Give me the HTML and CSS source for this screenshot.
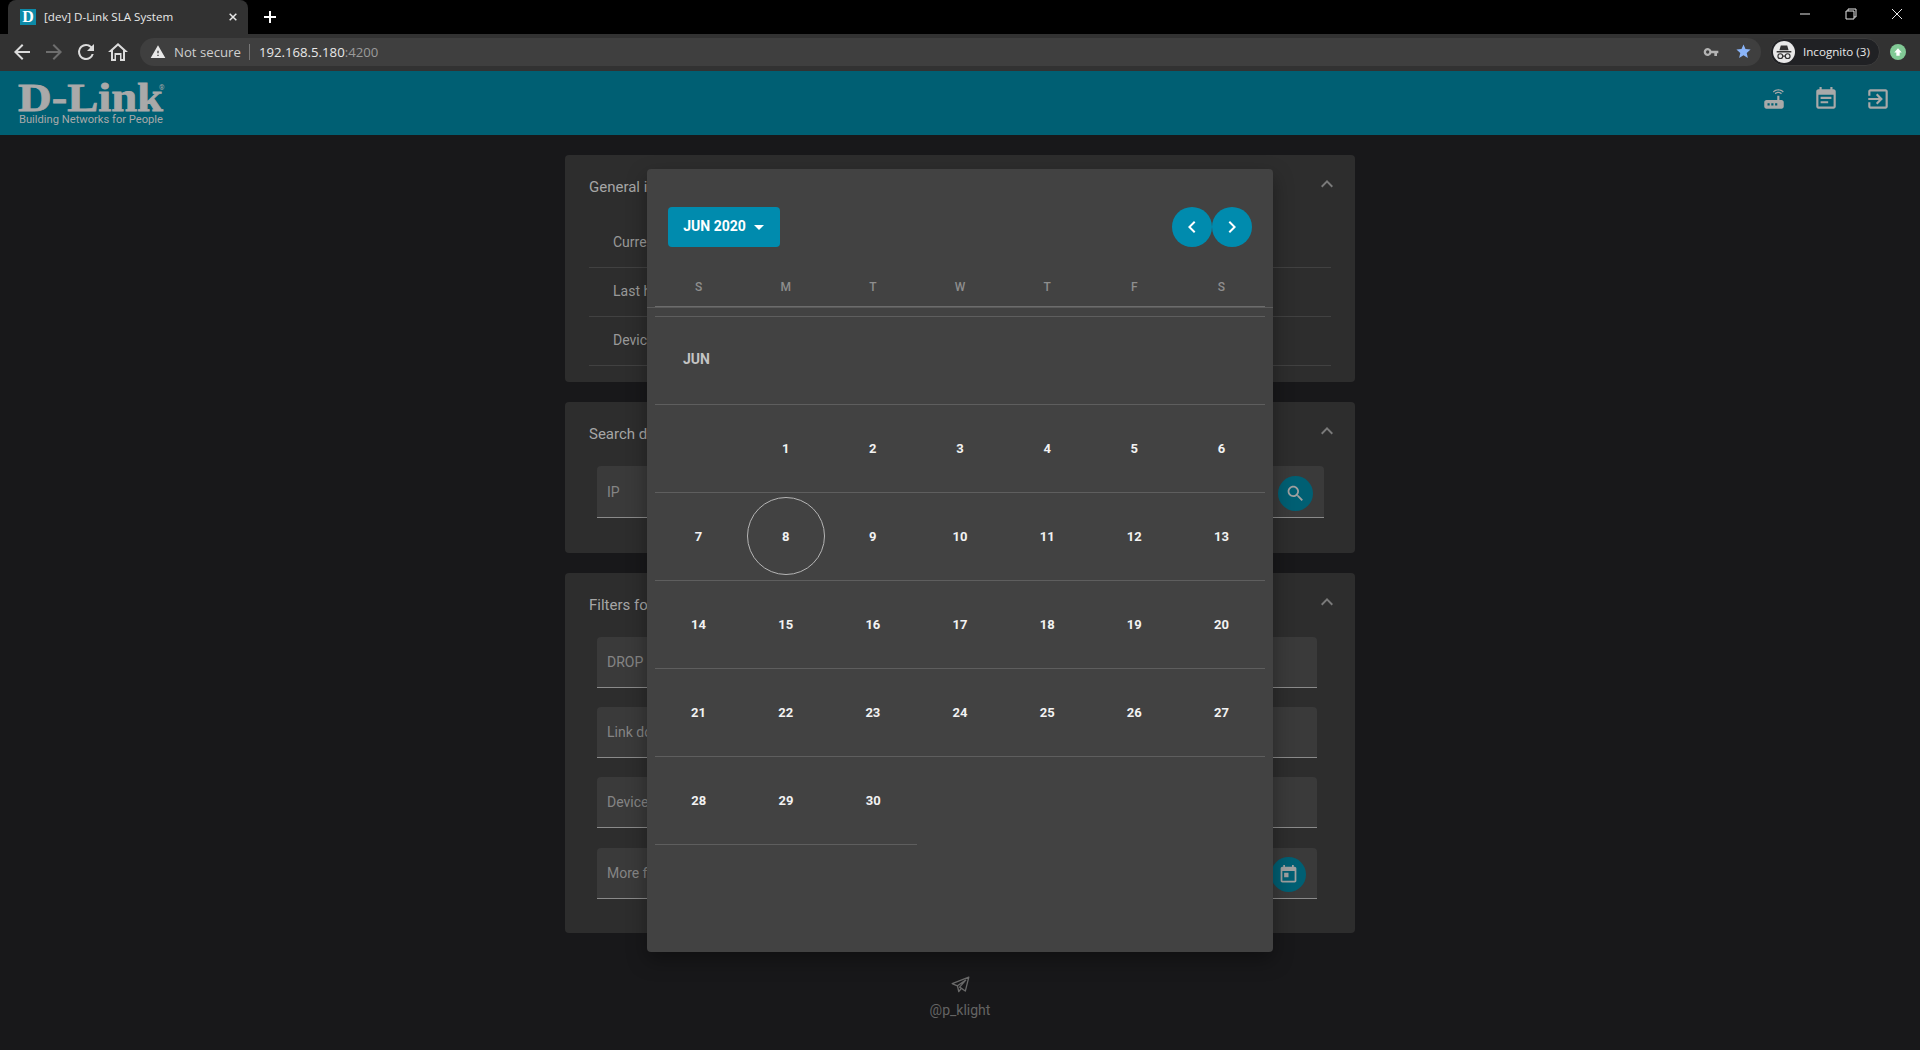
FILE: index.html
```html
<!DOCTYPE html>
<html>
<head>
	<title>[dev] D-Link SLA System</title>
	<link rel="stylesheet" href="styles.css">
</head>
<body>
	<div class="tabstrip">
		<div class="tab">
			<span class="favicon">D</span>
			<span class="tab-title">[dev] D-Link SLA System</span>
			<svg class="tab-close" viewBox="0 0 12 12"><path d="M2 2l8 8M10 2l-8 8"/></svg>
		</div>
		<svg class="new-tab" viewBox="0 0 14 14"><path d="M7 1v12M1 7h12"/></svg>
		<div class="win-controls">
			<svg viewBox="0 0 12 12"><path d="M1 6h10"/></svg>
			<svg viewBox="0 0 12 12"><path d="M3 3V1h8v8H9M1 3h8v8H1z"/></svg>
			<svg viewBox="0 0 12 12"><path d="M1 1l10 10M11 1L1 11"/></svg>
		</div>
	</div>

	<div class="toolbar">
		<svg class="nav-icon" viewBox="0 0 24 24"><path d="M20 11H7.83l5.59-5.59L12 4l-8 8 8 8 1.41-1.41L7.83 13H20z"/></svg>
		<svg class="nav-icon off" viewBox="0 0 24 24"><path d="M12 4l-1.41 1.41L16.17 11H4v2h12.17l-5.58 5.59L12 20l8-8z"/></svg>
		<svg class="nav-icon" viewBox="0 0 24 24"><path d="M17.65 6.35A7.96 7.96 0 0 0 12 4a8 8 0 1 0 7.73 10h-2.08A6 6 0 1 1 12 6c1.66 0 3.14.69 4.22 1.78L13 11h7V4z"/></svg>
		<svg class="nav-icon" viewBox="0 0 24 24"><path d="M12 3L2 12h3v9h5v-6h4v6h5v-9h3zm5 16h-1.500v-6h-7v6H7v-8.800l5-4.500 5 4.500z"/></svg>
		<div class="omnibox">
			<svg class="warn" viewBox="0 0 24 24"><path d="M1 21h22L12 2 1 21zm12-3h-2v-2h2v2zm0-4h-2v-4h2v4z"/></svg>
			<span class="not-secure">Not secure</span>
			<span class="omni-sep"></span>
			<span class="url">192.168.5.180<span class="url-port">:4200</span></span>
			<svg class="key" viewBox="0 0 24 24"><path d="M12.650 10A6 6 0 1 0 12.650 14H17v4h4v-4h2v-4zM7 14.500a2.500 2.500 0 1 1 0-5 2.500 2.500 0 0 1 0 5z"/></svg>
			<svg class="star" viewBox="0 0 24 24"><path d="M12 17.270L18.180 21l-1.640-7.030L22 9.240l-7.190-.61L12 2 9.190 8.630 2 9.240l5.460 4.730L5.820 21z"/></svg>
		</div>
		<div class="incognito">
			<span class="incognito-face">
				<svg viewBox="0 0 24 24"><path d="M7 10l1.500-5h7l1.500 5zM4 11h16v1.500H4z"/><circle class="glass" cx="8" cy="16.500" r="2.600"/><circle class="glass" cx="16" cy="16.500" r="2.600"/><path class="glass" d="M10.600 16.500h2.800"/></svg>
			</span>
			<span class="incognito-label">Incognito (3)</span>
		</div>
		<span class="update-dot">
			<svg viewBox="0 0 12 12"><path d="M6 1.500L1.500 6.500H4V10.500H8V6.500H10.500z"/></svg>
		</span>
	</div>

	<header class="app-header">
		<svg class="logo" viewBox="0 0 150 64">
			<text class="logo-name" x="0" y="39.500" textLength="145" lengthAdjust="spacingAndGlyphs">D-Link</text>
			<text class="logo-reg" x="141" y="19">®</text>
			<text class="logo-tag" x="1" y="52" textLength="144" lengthAdjust="spacingAndGlyphs">Building Networks for People</text>
		</svg>
		<div class="header-actions">
			<svg viewBox="0 0 24 24"><path d="M20.200 5.900l.8-.8C19.600 3.700 17.800 3 16 3s-3.600.7-5 2.100l.8.8C13 4.800 14.500 4.200 16 4.200s3 .6 4.200 1.700zm-.9.8c-.9-.9-2.100-1.400-3.300-1.400s-2.400.5-3.300 1.400l.8.8c.7-.7 1.600-1 2.500-1 .9 0 1.800.3 2.500 1l.8-.8zM19 13h-2V9h-2v4H5c-1.100 0-2 .9-2 2v4c0 1.100.9 2 2 2h14c1.100 0 2-.9 2-2v-4c0-1.100-.9-2-2-2zM8 18H6v-2h2v2zm3.500 0h-2v-2h2v2zm3.500 0h-2v-2h2v2z"/></svg>
			<svg viewBox="0 0 24 24"><path d="M17 10H7v2h10v-2zm2-7h-1V1h-2v2H8V1H6v2H5c-1.110 0-1.990.9-1.990 2L3 19c0 1.100.89 2 2 2h14c1.100 0 2-.9 2-2V5c0-1.100-.9-2-2-2zm0 16H5V8h14v11zm-5-5H7v2h7v-2z"/></svg>
			<svg viewBox="0 0 24 24"><path d="M10.090 15.590L11.500 17l5-5-5-5-1.410 1.410L12.670 11H3v2h9.670l-2.580 2.590zM19 3H5c-1.110 0-2 .9-2 2v4h2V5h14v14H5v-4H3v4c0 1.100.89 2 2 2h14c1.100 0 2-.9 2-2V5c0-1.100-.9-2-2-2z"/></svg>
		</div>
	</header>

	<main class="content">
		<section class="card card-info">
			<div class="card-head">
				<span class="card-title">General info</span>
				<svg class="chevron" viewBox="0 0 24 24"><path d="M12 8l-6 6 1.410 1.410L12 10.830l4.590 4.580L18 14z"/></svg>
			</div>
			<div class="info-row">Current</div>
			<div class="info-row">Last hour</div>
			<div class="info-row">Device</div>
		</section>

		<section class="card card-search">
			<div class="card-head">
				<span class="card-title">Search device</span>
				<svg class="chevron" viewBox="0 0 24 24"><path d="M12 8l-6 6 1.410 1.410L12 10.830l4.590 4.580L18 14z"/></svg>
			</div>
			<div class="field field-search">
				<span>IP</span>
				<span class="field-btn">
					<svg viewBox="0 0 24 24"><path d="M15.500 14h-.79l-.28-.27C15.410 12.590 16 11.110 16 9.500 16 5.910 13.090 3 9.500 3S3 5.910 3 9.500 5.910 16 9.500 16c1.610 0 3.090-.59 4.230-1.570l.27.28v.79l5 4.990L20.490 19l-4.990-5zm-6 0C7.010 14 5 11.990 5 9.500S7.010 5 9.500 5 14 7.010 14 9.500 11.990 14 9.500 14z"/></svg>
				</span>
			</div>
		</section>

		<section class="card card-filters">
			<div class="card-head">
				<span class="card-title">Filters for</span>
				<svg class="chevron" viewBox="0 0 24 24"><path d="M12 8l-6 6 1.410 1.410L12 10.830l4.590 4.580L18 14z"/></svg>
			</div>
			<div class="field"><span>DROP</span></div>
			<div class="field"><span>Link down</span></div>
			<div class="field"><span>Device</span></div>
			<div class="field field-last">
				<span>More filters</span>
				<span class="field-btn">
					<svg viewBox="0 0 24 24"><path d="M19 3h-1V1h-2v2H8V1H6v2H5c-1.110 0-1.990.9-1.990 2L3 19c0 1.100.89 2 2 2h14c1.100 0 2-.9 2-2V5c0-1.100-.9-2-2-2zm0 16H5V8h14v11zM7 10h5v5H7z"/></svg>
				</span>
			</div>
		</section>

		<footer class="credit">
			<svg viewBox="0 0 24 24"><path d="M21.500 3.500L2.500 11l6 2.500L18 7l-7 8 6.500 4.500zM8.500 13.500L10 20l2.500-3"/></svg>
			<span>@p_klight</span>
		</footer>
	</main>

	<div class="picker">
		<div class="picker-bar">
			<button class="period-btn">JUN 2020<span class="caret"></span></button>
			<div class="picker-nav">
				<span class="round-btn"><svg viewBox="0 0 24 24"><path d="M15.410 7.410L14 6l-6 6 6 6 1.410-1.410L10.830 12z"/></svg></span>
				<span class="round-btn"><svg viewBox="0 0 24 24"><path d="M10 6L8.590 7.410 13.170 12l-4.580 4.590L10 18l6-6z"/></svg></span>
			</div>
		</div>
		<div class="weekdays">
			<span>S</span><span>M</span><span>T</span><span>W</span><span>T</span><span>F</span><span>S</span>
		</div>
		<div class="divider"></div>
		<div class="month-row">JUN</div>
		<div class="week">
			<span></span><span>1</span><span>2</span><span>3</span><span>4</span><span>5</span><span>6</span>
		</div>
		<div class="week">
			<span>7</span><span class="today">8</span><span>9</span><span>10</span><span>11</span><span>12</span><span>13</span>
		</div>
		<div class="week">
			<span>14</span><span>15</span><span>16</span><span>17</span><span>18</span><span>19</span><span>20</span>
		</div>
		<div class="week">
			<span>21</span><span>22</span><span>23</span><span>24</span><span>25</span><span>26</span><span>27</span>
		</div>
		<div class="week week-last">
			<span>28</span><span>29</span><span>30</span>
		</div>
	</div>
</body>
</html>
```

FILE: styles.css
```css
* {
	box-sizing: border-box;
}
html, body {
	margin: 0;
	height: 100%;
	overflow: hidden;
}
body {
	background-color: #18181a;
	font-family: Roboto, "Liberation Sans", sans-serif;
	color: #a6a6a6;
}

/* browser chrome */
.tabstrip {
	height: 34px;
	background-color: #000;
	display: flex;
	align-items: flex-end;
	padding-left: 8px;
}
.tab {
	width: 240px;
	height: 34px;
	background-color: #323232;
	border-radius: 8px 8px 0 0;
	display: flex;
	align-items: center;
	padding: 0 12px 1px;
	color: #e8e8e8;
	font-family: "Open Sans", sans-serif;
	font-size: 11.600px;
}
.favicon {
	width: 16px;
	height: 16px;
	background-color: #0d8aa8;
	color: #fff;
	font-family: "Liberation Serif", serif;
	font-weight: bold;
	font-size: 16px;
	line-height: 16px;
	text-align: center;
	margin-right: 8px;
}
.tab-title {
	flex: 1;
}
.tab-close {
	width: 10px;
	height: 10px;
	fill: none;
	stroke: #e8e8e8;
	stroke-width: 1.800;
	margin-right: -2px;
}
.new-tab {
	width: 14px;
	height: 14px;
	fill: none;
	stroke: #fff;
	stroke-width: 2;
	margin: 0 0 10px 15px;
}
.win-controls {
	margin-left: auto;
	height: 34px;
	display: flex;
	align-items: flex-start;
	padding: 8px 17px 0 0;
	gap: 34px;
}
.win-controls svg {
	width: 12px;
	height: 12px;
	fill: none;
	stroke: #e6e6e6;
	stroke-width: 1;
}
.toolbar {
	height: 37px;
	background-color: #323232;
	display: flex;
	align-items: center;
	padding: 0 0 2px 10px;
}
.nav-icon {
	width: 24px;
	height: 24px;
	fill: #dcdcdc;
	margin-right: 8px;
}
.nav-icon.off {
	fill: #6e6e6e;
}
.omnibox {
	width: 1621px;
	height: 28px;
	margin-left: 2px;
	background-color: #3f3f3f;
	border-radius: 14px;
	display: flex;
	align-items: center;
	padding-left: 10px;
	font-family: "Open Sans", sans-serif;
	font-size: 13.200px;
}
.warn {
	width: 16px;
	height: 16px;
	fill: #e8e8e8;
}
.not-secure {
	margin-left: 8px;
	color: #cfcfcf;
}
.omni-sep {
	width: 1px;
	height: 16px;
	background-color: #777;
	margin: 0 9px 0 8px;
}
.url {
	color: #e8e8e8;
}
.url-port {
	color: #9a9a9a;
}
.key {
	width: 16px;
	height: 16px;
	fill: #b4b4b4;
	margin-left: auto;
}
.star {
	width: 17px;
	height: 17px;
	fill: #8ab4f8;
	margin: 0 9px 0 16px;
}
.incognito {
	width: 110px;
	height: 28px;
	margin-left: 9px;
	background-color: #202124;
	border: 1px solid #3c3c3c;
	border-radius: 14px;
	display: flex;
	align-items: center;
	padding-left: 2px;
	font-family: "Open Sans", sans-serif;
	font-size: 11.600px;
	color: #e8e8e8;
}
.incognito-face {
	width: 22px;
	height: 22px;
	background-color: #e8e8e8;
	border-radius: 50%;
	margin-right: 8px;
	display: flex;
}
.incognito-face svg {
	width: 22px;
	height: 22px;
	fill: #333;
}
.incognito-face .glass {
	fill: none;
	stroke: #333;
	stroke-width: 1.300;
}
.update-dot {
	width: 16px;
	height: 16px;
	margin-left: 10px;
	background-color: #81c995;
	border-radius: 50%;
	display: flex;
	align-items: center;
	justify-content: center;
}
.update-dot svg {
	width: 10px;
	height: 10px;
	fill: #fff;
}

/* app header */
.app-header {
	height: 64px;
	background-color: #005f73;
	display: flex;
	align-items: center;
	justify-content: space-between;
	padding: 0 29px 0 18px;
}
.logo {
	width: 150px;
	height: 64px;
	fill: #a9a9a9;
}
.logo-name {
	font-family: "Liberation Serif", serif;
	font-weight: bold;
	font-size: 40px;
	stroke: #a9a9a9;
	stroke-width: 0.800;
}
.logo-reg {
	font-size: 7px;
}
.logo-tag {
	font-size: 11.300px;
	font-weight: 400;
}
.header-actions {
	display: flex;
	gap: 26px;
	margin-top: -8px;
}
.header-actions svg {
	width: 26px;
	height: 26px;
	fill: #a9a9a9;
}

/* cards behind the dialog */
.content {
	width: 790px;
	margin: 0 auto;
	padding-top: 20px;
	display: flex;
	flex-direction: column;
	gap: 20px;
}
.card {
	background-color: #2d2d2d;
	border-radius: 4px;
	padding: 0 24px;
}
.card-info {
	height: 227px;
}
.card-search {
	height: 151px;
}
.card-filters {
	height: 360px;
}
.card-head {
	height: 64px;
	display: flex;
	justify-content: space-between;
	align-items: center;
}
.card-title {
	font-size: 15px;
	font-weight: 400;
	color: #a6a6a6;
}
.chevron {
	width: 24px;
	height: 24px;
	fill: #7a7a7a;
	margin: -6px -8px 0 0;
}
.info-row {
	height: 49px;
	border-bottom: 1px solid #414141;
	padding-left: 24px;
	font-size: 14px;
	line-height: 47px;
	color: #999;
}
.field {
	height: 51px;
	margin: 0 14px 19px 8px;
	padding: 0 10px;
	background-color: #3a3a3a;
	border-bottom: 1px solid #8a8a8a;
	border-radius: 4px 4px 0 0;
	display: flex;
	align-items: center;
	justify-content: space-between;
	font-size: 14px;
	color: #858585;
}
.field-search {
	height: 52px;
	margin: 0 7px 0 8px;
}
.field-last {
	margin-top: 20px;
}
.field-btn {
	width: 35px;
	height: 35px;
	background-color: #005f73;
	border-radius: 50%;
	display: flex;
	align-items: center;
	justify-content: center;
	margin: 3px 1px 0 0;
}
.field-btn svg {
	width: 21px;
	height: 21px;
	fill: #a0a0a0;
}
.credit {
	margin-top: 21px;
	display: flex;
	flex-direction: column;
	align-items: center;
	gap: 7px;
	font-size: 14px;
	color: #646464;
}
.credit svg {
	width: 21px;
	height: 21px;
	fill: none;
	stroke: #6a6a6a;
	stroke-width: 1.500;
	stroke-linejoin: round;
}

/* date picker */
.picker {
	position: absolute;
	left: 647px;
	top: 169px;
	width: 626px;
	height: 783px;
	background-color: #424242;
	border-radius: 4px;
	padding-top: 38px;
	box-shadow: 0 8px 20px rgba(0, 0, 0, 0.35);
}
.picker-bar {
	height: 40px;
	padding: 0 21px;
	display: flex;
	justify-content: space-between;
}
.period-btn {
	width: 112px;
	height: 40px;
	background-color: #008bae;
	color: #fff;
	border: none;
	border-radius: 4px;
	font-family: Roboto, sans-serif;
	font-size: 14px;
	font-weight: 700;
	display: flex;
	align-items: center;
	justify-content: center;
	gap: 8px;
	padding: 0 1px 2px 0;
}
.caret {
	border-top: 5px solid #fff;
	border-left: 5px solid transparent;
	border-right: 5px solid transparent;
	margin-top: 3px;
}
.picker-nav {
	display: flex;
}
.round-btn {
	width: 40px;
	height: 40px;
	background-color: #008bae;
	border-radius: 50%;
	display: flex;
	align-items: center;
	justify-content: center;
}
.round-btn svg {
	width: 24px;
	height: 24px;
	fill: #fff;
}
.weekdays {
	height: 60px;
	margin: 0 8px;
	padding-top: 31px;
	border-bottom: 1px solid #6c6c6c;
	display: grid;
	grid-template-columns: repeat(7, 1fr);
	text-align: center;
	font-size: 12px;
	font-weight: 500;
	line-height: 18px;
	color: #8e8e8e;
}
.divider {
	height: 9px;
	background: linear-gradient(#5a5a5a, #5a5a5a) top / 100% 1px no-repeat;
}
.month-row {
	height: 89px;
	margin: 0 8px;
	padding-left: 28px;
	border-top: 1px solid #5e5e5e;
	border-bottom: 1px solid #5e5e5e;
	font-size: 14px;
	font-weight: 700;
	line-height: 84px;
	color: #c4c4c4;
}
.week {
	height: 88px;
	margin: 0 8px;
	border-bottom: 1px solid #5e5e5e;
	display: grid;
	grid-template-columns: repeat(7, 1fr);
	align-items: center;
	justify-items: center;
	font-size: 13px;
	font-weight: 700;
	color: #f2f2f2;
}
.week-last {
	margin-right: 356px;
	grid-template-columns: repeat(3, 1fr);
}
.today {
	width: 78px;
	height: 78px;
	margin-bottom: 1px;
	border: 1px solid #b5b5b5;
	border-radius: 50%;
	display: flex;
	align-items: center;
	justify-content: center;
}
```
